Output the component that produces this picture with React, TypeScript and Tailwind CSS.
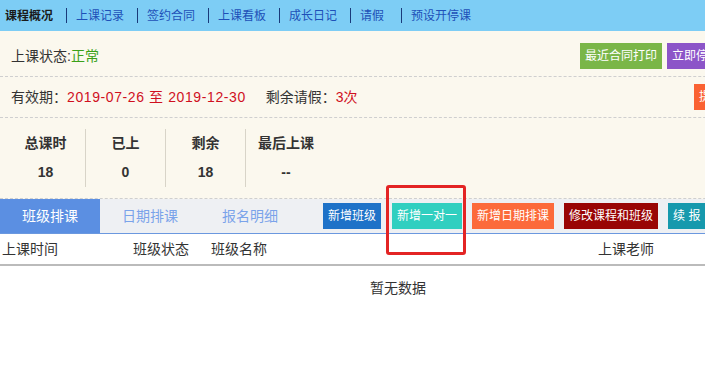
const navItems = ['上课记录', '签约合同', '上课看板', '成长日记', '请假', '预设开停课'];

const stats = [
  { label: '总课时', value: '18' },
  { label: '已上', value: '0' },
  { label: '剩余', value: '18' },
  { label: '最后上课', value: '--' },
];

export default function App() {
  return (
    <div
      className="relative w-[705px] h-[367px] overflow-hidden bg-white text-[14px] text-[#333]"
      style={{ fontFamily: '"Liberation Sans", "Noto Sans CJK SC", sans-serif' }}
    >
      {/* top nav */}
      <div className="flex items-center h-[31px] bg-[#7dcdf5] pl-[5px] text-[12px] whitespace-nowrap">
        <span className="font-bold text-[#1a1a1a]">课程概况</span>
        {navItems.map((item) => (
          <span key={item} className="flex items-center">
            <span className="ml-[13px] mr-[9px] w-px h-[15px] bg-[#1a3a7a]" />
            <span className={item === '请假' ? 'text-[#1e50b8] mr-[4px]' : 'text-[#1e50b8]'}>{item}</span>
          </span>
        ))}
      </div>

      {/* info panel */}
      <div className="w-[796px] bg-[#fbf8ee]">
        <div className="flex items-center justify-between h-[46px] pt-[5px] pl-[11px] pr-[71px] border-b border-dashed border-[#cfcfcf]">
          <div>
            上课状态:<span className="text-[#3aa118]">正常</span>
          </div>
          <div className="flex gap-[5px] text-[12px] text-white">
            <button className="h-[26px] px-[5px] bg-[#7ab648]">最近合同打印</button>
            <button className="h-[26px] px-[5px] bg-[#8c55c8]">立即停课</button>
          </div>
        </div>
        <div className="flex items-center justify-between h-[41px] pl-[11px] pr-[44px] border-b border-dashed border-[#cfcfcf]">
          <div>
            有效期：<span className="text-[#d0101e] tracking-[0.6px]">2019-07-26 至 2019-12-30</span>
            <span className="ml-[20px]">剩余请假：</span>
            <span className="text-[#d0101e]">3次</span>
          </div>
          <button className="h-[26px] px-[5px] text-[12px] text-white bg-[#fa6232]">提前结课</button>
        </div>
        <div className="flex items-center h-[81px] pl-[6px] border-b border-dashed border-[#cfcfcf]">
          {stats.map((s, i) => (
            <div
              key={s.label}
              className={
                i < 3
                  ? 'flex flex-col items-center justify-center gap-[8px] w-[80px] h-[58px] border-r border-[#d8d4c8] font-bold'
                  : 'flex flex-col items-center justify-center gap-[8px] w-[80px] h-[58px] font-bold'
              }
            >
              <span>{s.label}</span>
              <span>{s.value}</span>
            </div>
          ))}
        </div>
      </div>

      {/* tab strip */}
      <div className="flex items-center w-[796px] h-[35px] bg-[#eef0f3] border-b border-[#6b98df] whitespace-nowrap">
        <div className="flex items-center justify-center w-[100px] h-full bg-[#5b8fe2] text-white">班级排课</div>
        <div className="flex items-center justify-center w-[100px] h-full text-[#7aa3ea]">日期排课</div>
        <div className="flex items-center justify-center w-[100px] h-full text-[#7aa3ea]">报名明细</div>
        <div className="flex items-center gap-[10px] ml-[23px] text-[12px] text-white">
          <button className="h-[26px] px-[5px] bg-[#1e72c8]">新增班级</button>
          <button className="h-[26px] px-[5px] ml-[1px] bg-[#30cfc0]">新增一对一</button>
          <button className="h-[26px] px-[5px] bg-[#fc6a3b]">新增日期排课</button>
          <button className="h-[26px] px-[5px] bg-[#990505]">修改课程和班级</button>
          <button className="h-[26px] px-[5px] bg-[#1699ad]">续 报</button>
        </div>
      </div>

      {/* table */}
      <div className="w-[796px]">
        <div className="flex items-center h-[32px] pl-[2px] border-b-2 border-[#bbbbbb] whitespace-nowrap">
          <span className="w-[131px]">上课时间</span>
          <span className="w-[78px]">班级状态</span>
          <span className="w-[387px]">班级名称</span>
          <span>上课老师</span>
        </div>
        <div className="flex justify-center pt-[12px]">暂无数据</div>
      </div>

      {/* highlight box */}
      <div className="absolute left-[386px] top-[185px] w-[80px] h-[70px] border-[3px] border-[#e32424] rounded-[3px]" />
    </div>
  );
}
